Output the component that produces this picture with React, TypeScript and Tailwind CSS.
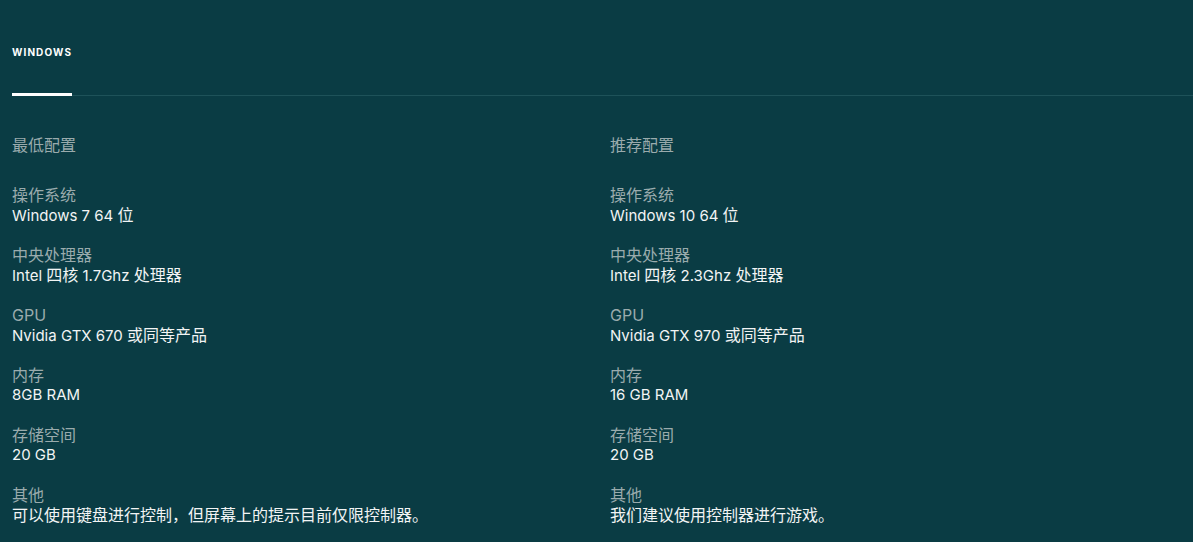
const MIN_SPECS = [
  { label: "操作系统", value: "Windows 7 64 位" },
  { label: "中央处理器", value: "Intel 四核 1.7Ghz 处理器" },
  { label: "GPU", value: "Nvidia GTX 670 或同等产品" },
  { label: "内存", value: "8GB RAM" },
  { label: "存储空间", value: "20 GB" },
  { label: "其他", value: "可以使用键盘进行控制，但屏幕上的提示目前仅限控制器。" },
];

const REC_SPECS = [
  { label: "操作系统", value: "Windows 10 64 位" },
  { label: "中央处理器", value: "Intel 四核 2.3Ghz 处理器" },
  { label: "GPU", value: "Nvidia GTX 970 或同等产品" },
  { label: "内存", value: "16 GB RAM" },
  { label: "存储空间", value: "20 GB" },
  { label: "其他", value: "我们建议使用控制器进行游戏。" },
];

// latin glyphs render a bit smaller than the CJK ones in the original
function Mixed({ text }: { text: string }) {
  const runs = text.match(/[\u3000-\u30ff\u4e00-\u9fff\uff00-\uffef]+|[^\u3000-\u30ff\u4e00-\u9fff\uff00-\uffef]+/g) ?? [];
  return (
    <>
      {runs.map((r, i) =>
        /[\u3000-\u30ff\u4e00-\u9fff\uff00-\uffef]/.test(r) ? (
          <span key={i} className="text-[16px]">{r}</span>
        ) : (
          <span key={i}>{r}</span>
        ),
      )}
    </>
  );
}

function SpecColumn({ title, specs }: { title: string; specs: { label: string; value: string }[] }) {
  return (
    <div className="flex flex-col">
      <h3 className="text-[16px] leading-5 text-[#9aabad] font-normal">{title}</h3>
      <dl className="mt-[30px] flex flex-col gap-5">
        {specs.map((s) => (
          <div key={s.label} className="flex flex-col">
            <dt className="h-5 text-[16px] leading-5 text-[#9aabad]">
              <Mixed text={s.label} />
            </dt>
            <dd className="h-5 text-[15px] leading-5 text-[#f2f4f4]">
              <Mixed text={s.value} />
            </dd>
          </div>
        ))}
      </dl>
    </div>
  );
}

export default function App() {
  return (
    <div
      className="min-h-[542px] w-full bg-[#0a3c44] pl-3"
      style={{ fontFamily: "Inter, 'Noto Sans CJK SC', sans-serif" }}
    >
      <div className="flex items-end pt-[46px]">
        <div className="flex w-[60px] flex-col">
          <span className="text-[10px] font-bold leading-3 tracking-[0.11em] text-white">WINDOWS</span>
          <div className="mt-[35px] h-[3px] w-full bg-white" />
        </div>
        <div className="h-px flex-1 bg-[#1e5259]" />
      </div>
      <div className="mt-[39px] grid grid-cols-[598px_1fr]">
        <SpecColumn title="最低配置" specs={MIN_SPECS} />
        <SpecColumn title="推荐配置" specs={REC_SPECS} />
      </div>
    </div>
  );
}
